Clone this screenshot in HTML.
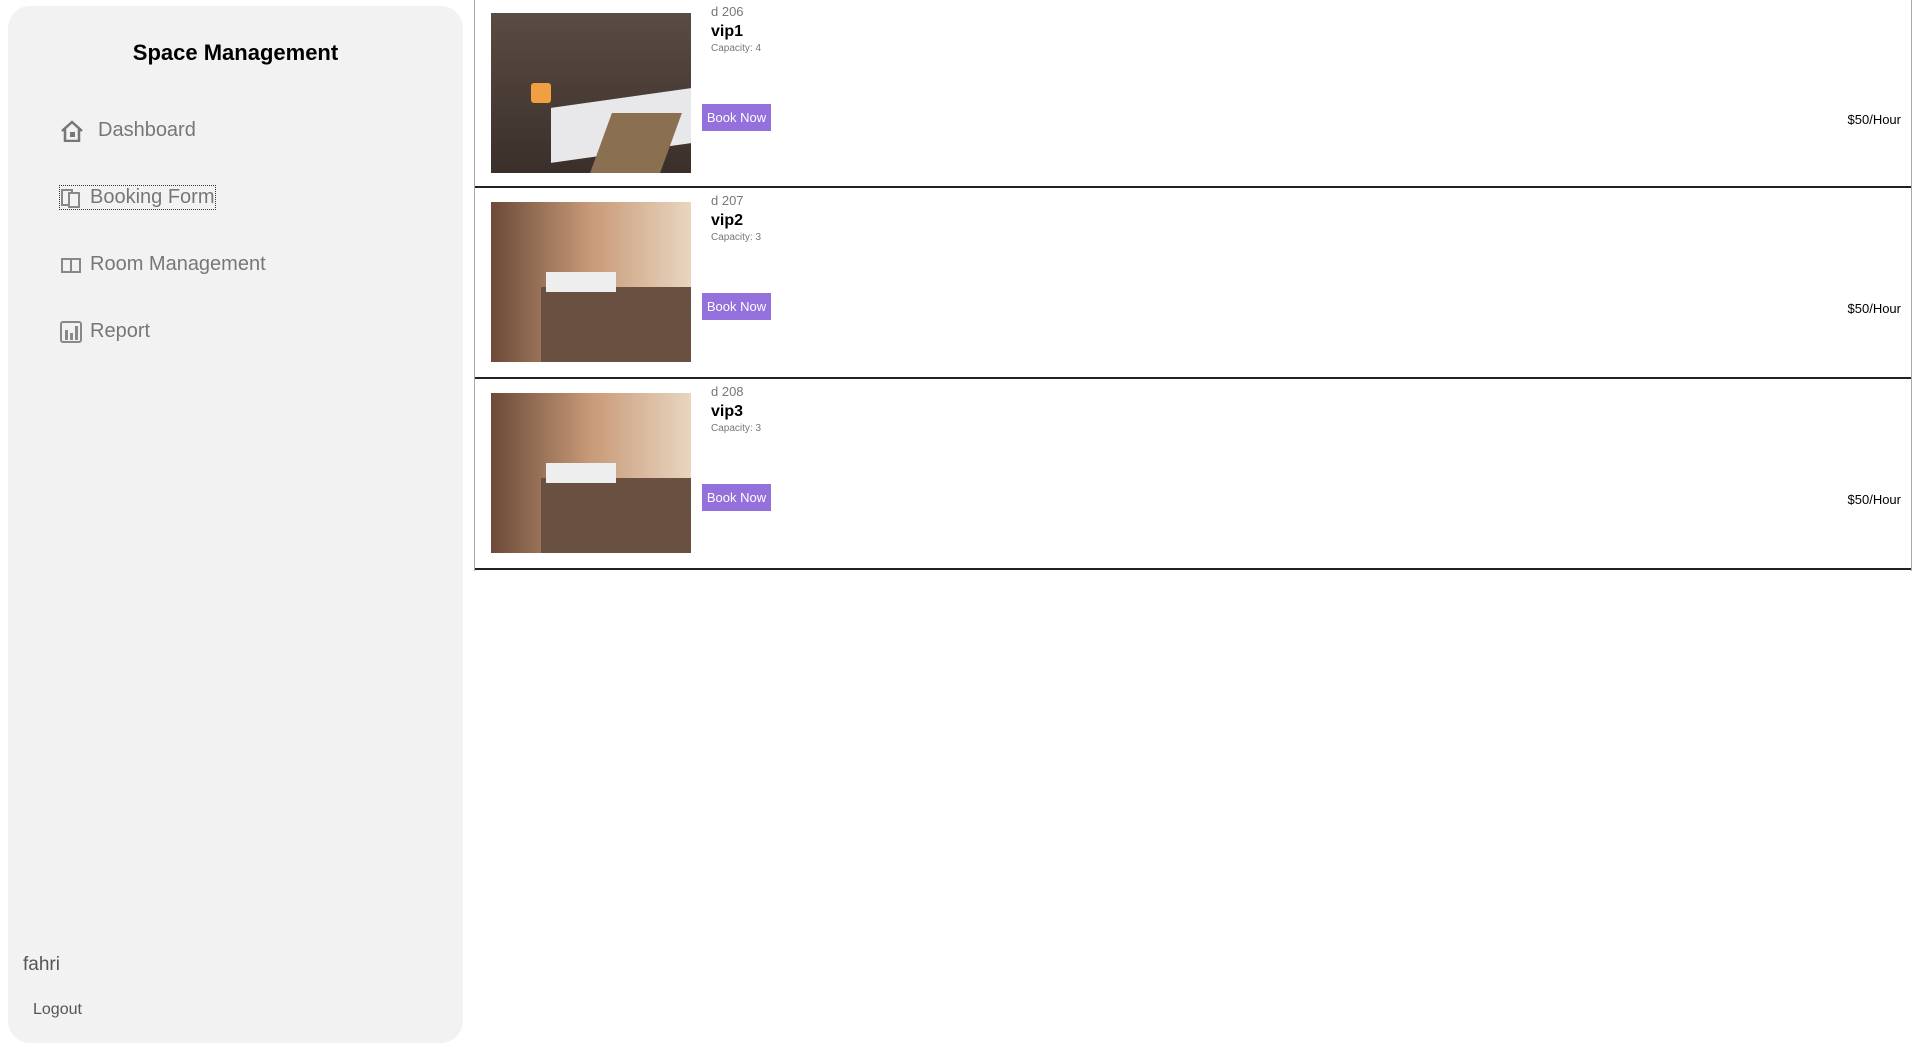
<!DOCTYPE html>
<html><head><style>
body{margin:0;width:1913px;height:1053px;background:#fff;font-family:"Liberation Sans",sans-serif;position:relative;overflow:hidden}
.sb{position:absolute;left:8px;top:6px;width:455px;height:1037px;background:#f2f2f2;border-radius:22px}
.t{position:absolute;left:0;width:455px;top:34px;text-align:center;font-weight:bold;font-size:22px;color:#000}
.m{position:absolute;left:52px;font-size:20px;color:#777;display:flex;align-items:center}
.m svg{margin-right:8px}
.main{position:absolute;left:474px;top:0;width:1436px;height:571px;border-left:1px solid #aaa;border-right:1px solid #aaa}
.card{position:absolute;left:0;width:1436px;height:188px;border-bottom:2px solid #222}
.img{position:absolute;left:16px;top:13px;width:200px;height:160px;overflow:hidden}
.d{position:absolute;left:236px;top:4px;font-size:13px;color:#777}
.n{position:absolute;left:236px;top:23px;font-size:16px;font-weight:bold}
.c{position:absolute;left:236px;top:43px;font-size:10px;color:#777}
.b{position:absolute;left:227px;top:104px;width:69px;height:27px;background:#9370db;color:#fff;font-size:13px;line-height:27px;text-align:center}
.p{position:absolute;right:10px;top:112px;font-size:13px}
</style></head><body>
<div class="sb">
<div class="t">Space Management</div>
<div class="m" style="top:113px"><svg width="24" height="22" viewBox="0 0 24 22"><path d="M2 11L12 2L22 11M5 9V21H19V9" fill="none" stroke="#777" stroke-width="2.5"/><rect x="10" y="12" width="5" height="5" fill="#777"/></svg><span style="margin-left:6px">Dashboard</span></div>
<div class="m" style="top:180px;outline:1px dotted #333"><svg width="22" height="20" viewBox="0 0 22 20"><rect x="2" y="2" width="10" height="15" fill="none" stroke="#888" stroke-width="2"/><rect x="9" y="5" width="10" height="14" fill="#f2f2f2" stroke="#888" stroke-width="2"/></svg>Booking Form</div>
<div class="m" style="top:247px"><svg width="22" height="20" viewBox="0 0 22 20"><path d="M2 4H20V17H2Z M11 4V17" fill="none" stroke="#888" stroke-width="2"/></svg>Room Management</div>
<div class="m" style="top:314px"><svg width="22" height="22" viewBox="0 0 22 22"><rect x="1" y="1" width="20" height="20" rx="2" fill="none" stroke="#888" stroke-width="2"/><rect x="5" y="9" width="3" height="10" fill="#888"/><rect x="10" y="12" width="3" height="7" fill="#888"/><rect x="15" y="5" width="3" height="14" fill="#888"/></svg>Report</div>
<div style="position:absolute;left:15px;top:948px;font-size:19px;color:#555">fahri</div>
<div style="position:absolute;left:25px;top:995px;font-size:16px;color:#555">Logout</div>
</div>
<div class="main">
<div class="card" style="top:0;height:186px">
<div class="img" style="background:linear-gradient(#5a4c44,#3a2f2a)"><div style="position:absolute;left:60px;top:85px;width:140px;height:55px;background:#e8e8ea;transform:skewY(-8deg)"></div><div style="position:absolute;left:110px;top:100px;width:70px;height:60px;background:#8a7050;transform:skewX(-20deg)"></div><div style="position:absolute;left:40px;top:70px;width:20px;height:20px;background:#f0a040;border-radius:3px"></div></div>
<div class="d">d 206</div><div class="n">vip1</div><div class="c">Capacity: 4</div><div class="b">Book Now</div><div class="p">$50/Hour</div></div>
<div class="card" style="top:189px">
<div class="img" style="background:linear-gradient(90deg,#6b4a38,#c89a78 50%,#e8d6c0)"><div style="position:absolute;left:50px;top:85px;width:150px;height:75px;background:#6a5040"></div><div style="position:absolute;left:55px;top:70px;width:70px;height:20px;background:#eee"></div></div>
<div class="d">d 207</div><div class="n">vip2</div><div class="c">Capacity: 3</div><div class="b">Book Now</div><div class="p">$50/Hour</div></div>
<div class="card" style="top:380px">
<div class="img" style="background:linear-gradient(90deg,#6b4a38,#c89a78 50%,#e8d6c0)"><div style="position:absolute;left:50px;top:85px;width:150px;height:75px;background:#6a5040"></div><div style="position:absolute;left:55px;top:70px;width:70px;height:20px;background:#eee"></div></div>
<div class="d">d 208</div><div class="n">vip3</div><div class="c">Capacity: 3</div><div class="b">Book Now</div><div class="p">$50/Hour</div></div>
</div>
</body></html>
